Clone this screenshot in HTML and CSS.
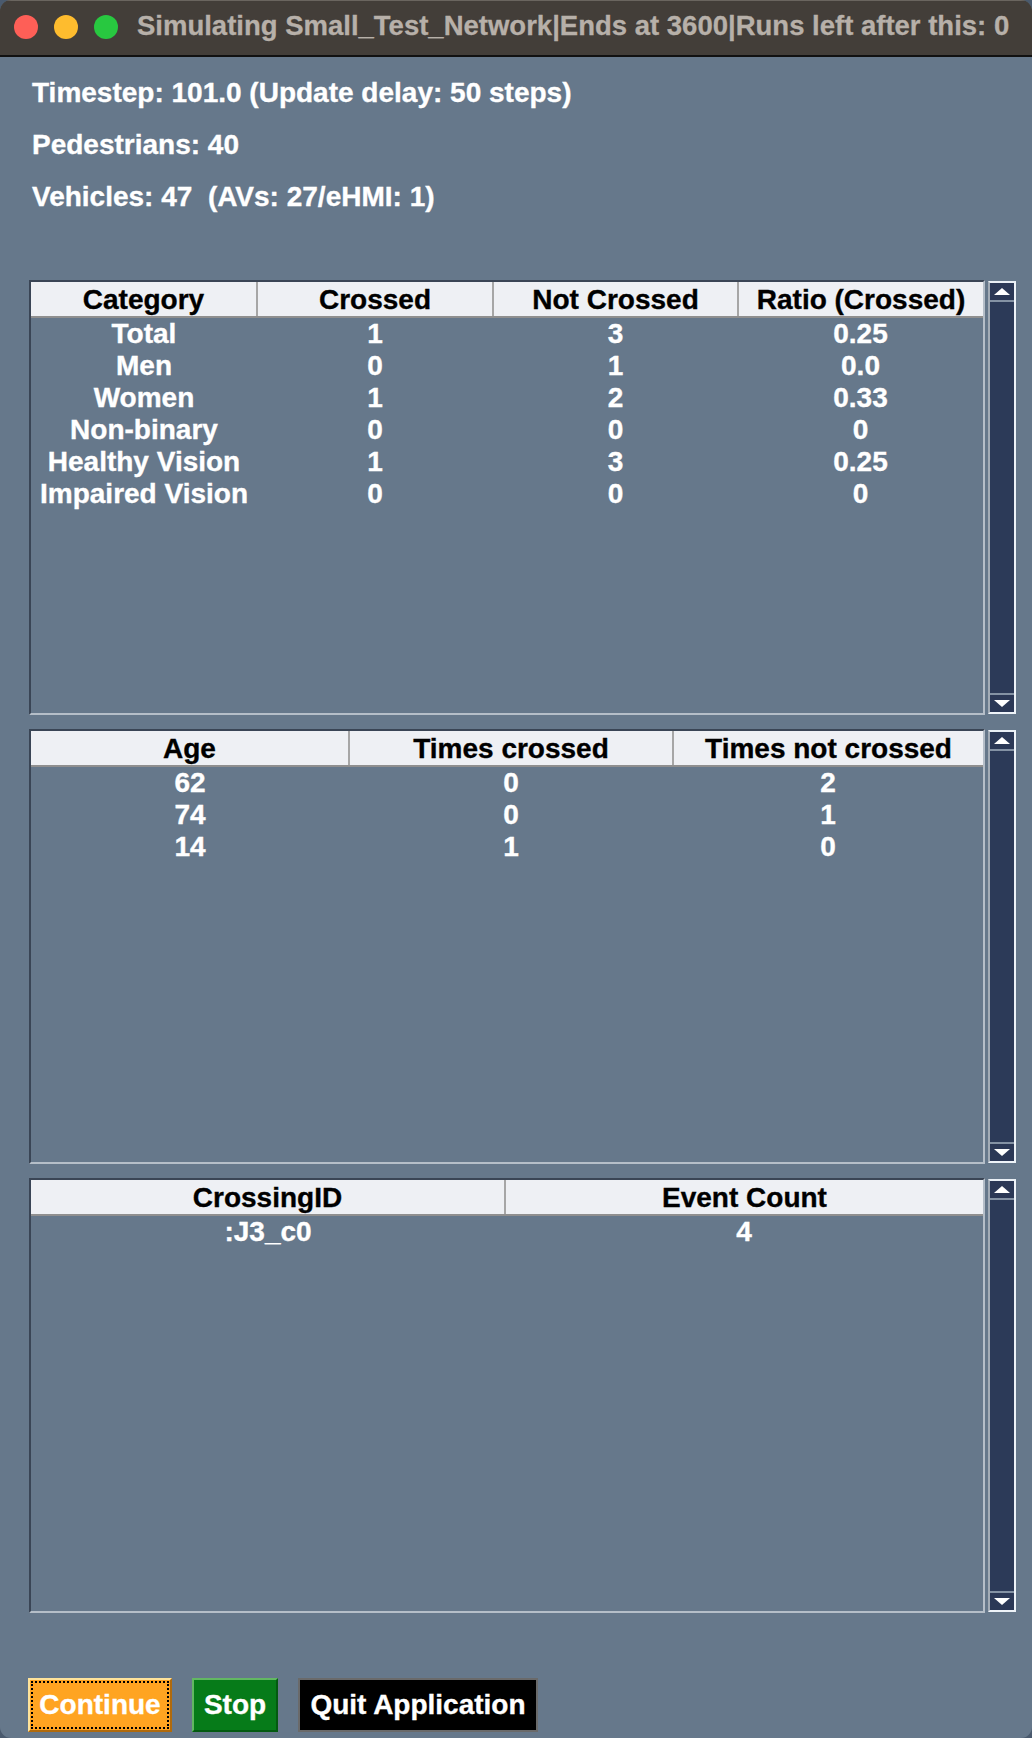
FILE: index.html
```html
<!DOCTYPE html>
<html lang="en">
<head>
<meta charset="utf-8">
<title>Simulating Small_Test_Network</title>
<link rel="stylesheet" href="styles.css">
</head>
<body>
<div class="window">
  <header class="titlebar">
    <div class="lights">
      <span class="light red"></span>
      <span class="light yellow"></span>
      <span class="light green"></span>
    </div>
    <div class="title">Simulating Small_Test_Network|Ends at 3600|Runs left after this: 0</div>
  </header>

  <main class="content">
    <section class="stats">
      <p class="stat">Timestep: 101.0 (Update delay: 50 steps)</p>
      <p class="stat">Pedestrians: 40</p>
      <p class="stat">Vehicles: 47&nbsp; (AVs: 27/eHMI: 1)</p>
    </section>

    <section class="tables">
      <div class="panel">
        <div class="table-box">
          <table class="grid">
            <colgroup>
              <col class="c1-1"><col class="c1-2"><col class="c1-3"><col class="c1-4">
            </colgroup>
            <thead>
              <tr><th>Category</th><th>Crossed</th><th>Not Crossed</th><th>Ratio (Crossed)</th></tr>
            </thead>
            <tbody>
              <tr><td>Total</td><td>1</td><td>3</td><td>0.25</td></tr>
              <tr><td>Men</td><td>0</td><td>1</td><td>0.0</td></tr>
              <tr><td>Women</td><td>1</td><td>2</td><td>0.33</td></tr>
              <tr><td>Non-binary</td><td>0</td><td>0</td><td>0</td></tr>
              <tr><td>Healthy Vision</td><td>1</td><td>3</td><td>0.25</td></tr>
              <tr><td>Impaired Vision</td><td>0</td><td>0</td><td>0</td></tr>
            </tbody>
          </table>
        </div>
        <div class="scrollbar">
          <div class="sb-btn sb-up"><svg width="16" height="8" viewBox="0 0 16 8"><polygon points="0,7 8,0 16,7" fill="#fff"/></svg></div>
          <div class="sb-track"></div>
          <div class="sb-btn sb-down"><svg width="16" height="8" viewBox="0 0 16 8"><polygon points="0,0 16,0 8,7" fill="#fff"/></svg></div>
        </div>
      </div>

      <div class="panel">
        <div class="table-box">
          <table class="grid">
            <colgroup>
              <col class="c2-1"><col class="c2-2"><col class="c2-3">
            </colgroup>
            <thead>
              <tr><th>Age</th><th>Times crossed</th><th>Times not crossed</th></tr>
            </thead>
            <tbody>
              <tr><td>62</td><td>0</td><td>2</td></tr>
              <tr><td>74</td><td>0</td><td>1</td></tr>
              <tr><td>14</td><td>1</td><td>0</td></tr>
            </tbody>
          </table>
        </div>
        <div class="scrollbar">
          <div class="sb-btn sb-up"><svg width="16" height="8" viewBox="0 0 16 8"><polygon points="0,7 8,0 16,7" fill="#fff"/></svg></div>
          <div class="sb-track"></div>
          <div class="sb-btn sb-down"><svg width="16" height="8" viewBox="0 0 16 8"><polygon points="0,0 16,0 8,7" fill="#fff"/></svg></div>
        </div>
      </div>

      <div class="panel">
        <div class="table-box">
          <table class="grid">
            <colgroup>
              <col class="c3-1"><col class="c3-2">
            </colgroup>
            <thead>
              <tr><th>CrossingID</th><th>Event Count</th></tr>
            </thead>
            <tbody>
              <tr><td>:J3_c0</td><td>4</td></tr>
            </tbody>
          </table>
        </div>
        <div class="scrollbar">
          <div class="sb-btn sb-up"><svg width="16" height="8" viewBox="0 0 16 8"><polygon points="0,7 8,0 16,7" fill="#fff"/></svg></div>
          <div class="sb-track"></div>
          <div class="sb-btn sb-down"><svg width="16" height="8" viewBox="0 0 16 8"><polygon points="0,0 16,0 8,7" fill="#fff"/></svg></div>
        </div>
      </div>
    </section>

    <footer class="buttons">
      <button class="btn btn-continue">Continue</button>
      <button class="btn btn-stop">Stop</button>
      <button class="btn btn-quit">Quit Application</button>
    </footer>
  </main>
</div>
</body>
</html>
```

FILE: styles.css
```css
* { box-sizing: border-box; }

html, body {
  margin: 0;
  padding: 0;
  background: #4a5a6e;
}

body {
  width: 1032px;
  height: 1738px;
  font-family: "Liberation Sans", Arial, sans-serif;
  font-weight: bold;
}

.window {
  width: 1032px;
  height: 1738px;
  border-radius: 11px;
  overflow: hidden;
  background: #66788b;
  display: flex;
  flex-direction: column;
}

/* ---- title bar ---- */
.titlebar {
  height: 57px;
  flex: 0 0 57px;
  background: #433e39;
  border-top: 1px solid #6a655f;
  border-bottom: 2px solid #111;
  display: flex;
  align-items: center;
  padding-left: 14px;
}

.lights {
  display: flex;
  gap: 16px;
  margin-top: -2px;
}

.light {
  width: 24px;
  height: 24px;
  border-radius: 50%;
  display: block;
}
.red { background: #fe5f57; }
.yellow { background: #febc2e; }
.green { background: #28c840; }

.title {
  margin-left: 19px;
  margin-top: -4px;
  color: #b7b0a9;
  font-size: 27.5px;
  white-space: nowrap;
  -webkit-text-stroke: 0.3px #b7b0a9;
}

/* ---- content ---- */
.content {
  flex: 1;
  display: flex;
  flex-direction: column;
  padding: 10px 16px 0 29px;
}

.stats {
  padding-left: 3px;
}

.stat {
  margin: 0;
  height: 52px;
  line-height: 52px;
  color: #fff;
  font-size: 28px;
  white-space: pre;
  -webkit-text-stroke: 0.35px #fff;
}

.tables {
  margin-top: 57px;
  display: flex;
  flex-direction: column;
  gap: 14px;
}

.panel {
  height: 435px;
  display: flex;
  gap: 3px;
}

.table-box {
  width: 956px;
  height: 100%;
  border-style: solid;
  border-width: 2px;
  border-color: #3a4555 #b5bec8 #b5bec8 #3a4555;
  background: #66788b;
}

.grid {
  width: 952px;
  table-layout: fixed;
  border-collapse: collapse;
  font-size: 28px;
}

.grid th {
  height: 35px;
  padding: 0;
  background: #eef0f4;
  color: #000;
  text-align: center;
  border-right: 2px solid #a6a6a6;
  border-bottom: 2px solid #8f8f8f;
  line-height: 33px;
  white-space: nowrap;
  overflow: hidden;
  -webkit-text-stroke: 0.35px #000;
}
.grid th:last-child { border-right: none; }

.grid td {
  height: 32px;
  padding: 0;
  line-height: 32px;
  color: #fff;
  text-align: center;
  white-space: nowrap;
  -webkit-text-stroke: 0.35px #fff;
}

.c1-1 { width: 226px; }
.c1-2 { width: 236px; }
.c1-3 { width: 245px; }
.c1-4 { width: 245px; }

.c2-1 { width: 318px; }
.c2-2 { width: 324px; }
.c2-3 { width: 310px; }

.c3-1 { width: 474px; }
.c3-2 { width: 478px; }

/* ---- scrollbar ---- */
.scrollbar {
  width: 28px;
  height: 433px;
  margin-top: 1px;
  border-style: solid;
  border-width: 2px;
  border-color: #e9eff5 #eef3f8 #eef3f8 #a3acb6;
  background: #2b3856;
  display: flex;
  flex-direction: column;
}

.sb-btn {
  height: 19px;
  flex: 0 0 19px;
  background: #2b3856;
  display: flex;
  align-items: center;
  justify-content: center;
}
.sb-up { border-bottom: 2px solid #8492a4; }
.sb-down { border-top: 2px solid #8492a4; }
.sb-up svg { margin-top: 1px; }
.sb-down svg { margin-top: 1px; }

.sb-track {
  flex: 1;
  background: #2c3a58;
}

/* ---- buttons ---- */
.buttons {
  margin-top: 65px;
  display: flex;
  gap: 20px;
  margin-left: -1px;
}

.btn {
  height: 54px;
  padding: 0;
  font-family: "Liberation Sans", Arial, sans-serif;
  font-weight: bold;
  font-size: 28px;
  color: #fff;
  border-style: solid;
  border-width: 2px;
  cursor: pointer;
  line-height: 50px;
  -webkit-text-stroke: 0.35px #fff;
}

.btn-continue {
  width: 144px;
  background: #ffa421;
  border-color: #ffe39a #b06a0c #b06a0c #ffe39a;
  outline: 2px dotted #000;
  outline-offset: -5px;
}

.btn-stop {
  width: 86px;
  background: #067b19;
  border-color: #62b862 #035a10 #035a10 #62b862;
}

.btn-quit {
  width: 240px;
  background: #000;
  border-color: #6a6a6a;
}
```
